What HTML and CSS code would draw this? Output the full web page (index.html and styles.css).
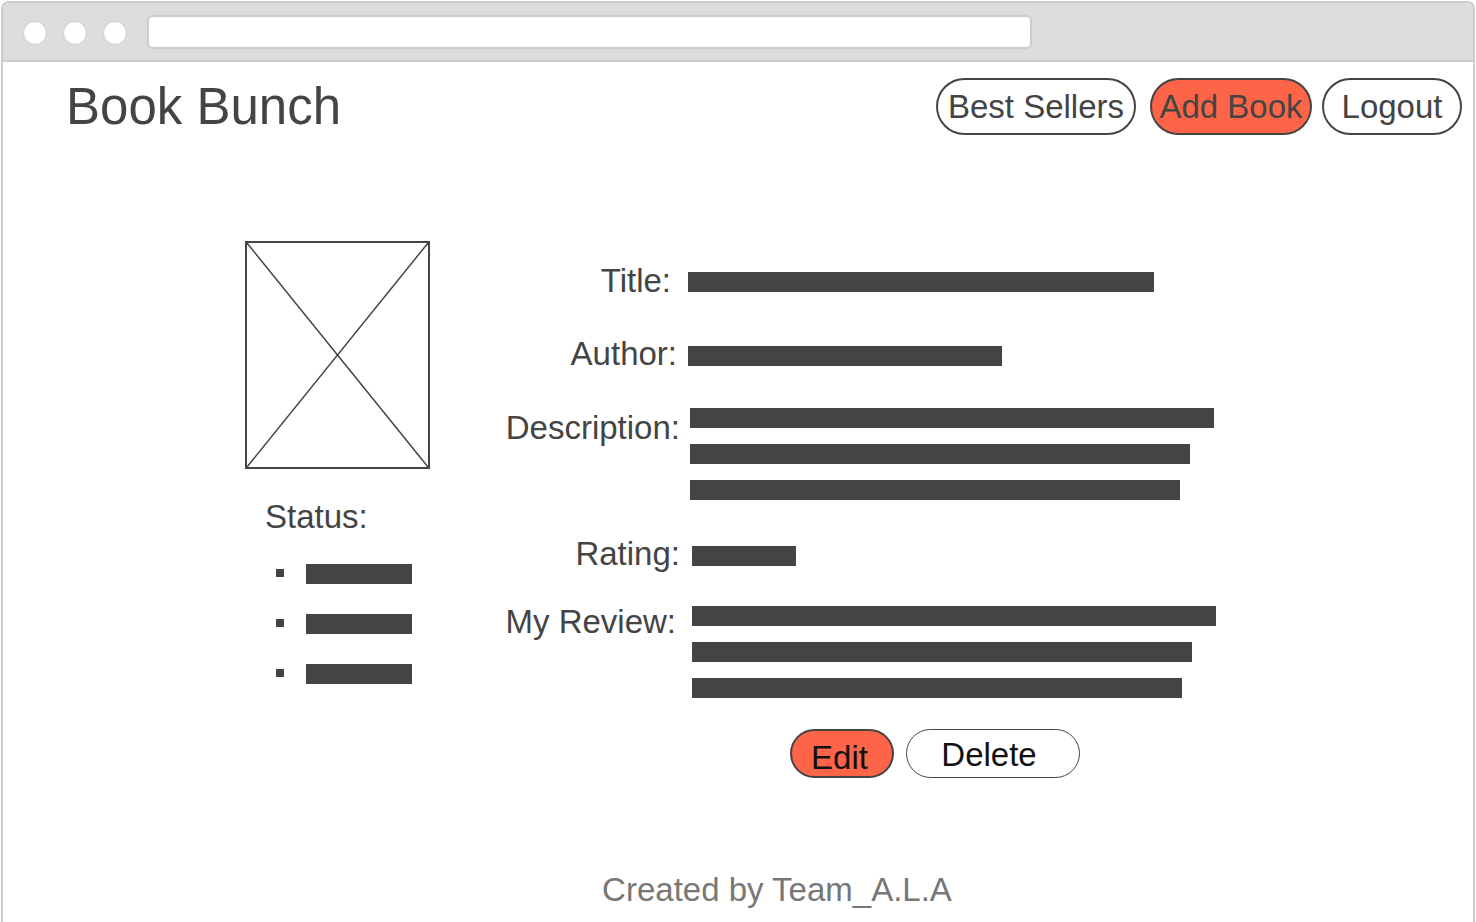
FILE: index.html
```html
<!DOCTYPE html>
<html lang="en">
<head>
<meta charset="utf-8">
<title>Book Bunch</title>
<link rel="stylesheet" href="styles.css">
</head>
<body>
<div class="window">
  <div class="topbar">
    <span class="dot"></span>
    <span class="dot"></span>
    <span class="dot"></span>
    <span class="address"></span>
  </div>
  <div class="page">
    <header class="navbar">
      <h1 class="brand">Book Bunch</h1>
      <nav class="nav">
        <button class="pill pill-best">Best Sellers</button>
        <button class="pill pill-add">Add Book</button>
        <button class="pill pill-logout">Logout</button>
      </nav>
    </header>

    <main class="book">
      <section class="side">
        <div class="cover">
          <svg viewBox="0 0 100 100" preserveAspectRatio="none">
            <line x1="0" y1="0" x2="100" y2="100" vector-effect="non-scaling-stroke"/>
            <line x1="100" y1="0" x2="0" y2="100" vector-effect="non-scaling-stroke"/>
          </svg>
        </div>
        <div class="status-label">Status:</div>
        <ul class="status-list">
          <li><span class="bullet"></span><span class="bar" style="width:106px"></span></li>
          <li><span class="bullet"></span><span class="bar" style="width:106px"></span></li>
          <li><span class="bullet"></span><span class="bar" style="width:106px"></span></li>
        </ul>
      </section>

      <section class="details">
        <div class="row">
          <div class="label label-title">Title:</div>
          <div class="value value-near"><span class="bar" style="width:466px"></span></div>
        </div>
        <div class="row row-author">
          <div class="label label-author">Author:</div>
          <div class="value value-near"><span class="bar" style="width:314px"></span></div>
        </div>
        <div class="row row-desc">
          <div class="label label-desc">Description:</div>
          <div class="value">
            <span class="bar" style="width:524px"></span>
            <span class="bar" style="width:500px"></span>
            <span class="bar" style="width:490px"></span>
          </div>
        </div>
        <div class="row row-rating">
          <div class="label label-rating">Rating:</div>
          <div class="value value-far"><span class="bar" style="width:104px"></span></div>
        </div>
        <div class="row">
          <div class="label label-review">My Review:</div>
          <div class="value value-far">
            <span class="bar" style="width:524px"></span>
            <span class="bar" style="width:500px"></span>
            <span class="bar" style="width:490px"></span>
          </div>
        </div>
        <div class="actions">
          <button class="pill pill-edit">Edit</button>
          <button class="pill pill-delete">Delete</button>
        </div>
      </section>
    </main>

    <footer class="footer">Created by Team_A.L.A</footer>
  </div>
</div>
</body>
</html>
```

FILE: styles.css
```css
* { box-sizing: border-box; }

html, body {
  margin: 0;
  padding: 0;
  background: #ffffff;
  overflow: hidden;
}

body {
  font-family: "Liberation Sans", Arial, sans-serif;
  color: #444444;
}

.window {
  margin: 1px 1px 0 1px;
  height: 940px;
  border: 2px solid #cccccc;
  border-bottom: none;
  border-radius: 8px 8px 0 0;
  overflow: hidden;
}

.topbar {
  height: 59px;
  padding: 3px 0 0 20px;
  background: #dddddd;
  border-bottom: 2px solid #cccccc;
  display: flex;
  align-items: center;
  gap: 16px;
}

.dot {
  width: 24px;
  height: 24px;
  border-radius: 50%;
  background: #ffffff;
  border: 1px solid #cccccc;
  flex: none;
}

.address {
  margin-left: 4px;
  width: 885px;
  height: 34px;
  margin-top: -2px;
  background: #ffffff;
  border: 2px solid #cccccc;
  border-radius: 6px;
}

.navbar {
  display: flex;
  justify-content: space-between;
  align-items: flex-start;
  padding: 16px 11px 0 63px;
}

.brand {
  margin: 0;
  font-weight: normal;
  font-size: 51px;
  line-height: 57px;
  color: #444444;
}

.nav {
  display: flex;
  gap: 14px;
}

.pill {
  font-family: "Liberation Sans", Arial, sans-serif;
  font-size: 33px;
  color: #444444;
  background: #ffffff;
  border: 2px solid #444444;
  border-radius: 999px;
  padding: 0;
  height: 57px;
  line-height: 53px;
  text-align: center;
  white-space: nowrap;
}

.pill-best { width: 200px; }
.pill-add { width: 162px; background: #fe6447; }
.pill-logout { width: 140px; margin-left: -4px; }

.book {
  display: flex;
  align-items: flex-start;
  padding-left: 242px;
  margin-top: 106px;
}

.side {
  width: 185px;
  flex: none;
}

.cover {
  width: 185px;
  height: 228px;
  border: 2px solid #444444;
}

.cover svg {
  display: block;
  width: 100%;
  height: 100%;
}

.cover line {
  stroke: #444444;
  stroke-width: 1.5;
}

.status-label {
  margin-top: 28px;
  padding-left: 20px;
  font-size: 33px;
  line-height: 40px;
}

.status-list {
  list-style: none;
  margin: 27px 0 0 0;
  padding: 0 0 0 31px;
  display: flex;
  flex-direction: column;
  gap: 30px;
}

.status-list li {
  display: flex;
  align-items: center;
}

.bullet {
  width: 8px;
  height: 8px;
  background: #444444;
  margin-right: 22px;
  margin-top: -3px;
}

.bar {
  display: block;
  height: 20px;
  background: #444444;
}

.details {
  margin-left: 60px;
  margin-top: 31px;
  display: flex;
  flex-direction: column;
  gap: 40px;
}

.row {
  display: flex;
  align-items: flex-start;
}

.row-author { margin-top: 14px; }
.row-desc { margin-top: 2px; }
.row-rating { margin-top: 6px; }

.label {
  width: 190px;
  flex: none;
  text-align: right;
  font-size: 33px;
  line-height: 20px;
  white-space: nowrap;
}

.label-title { padding-right: 9px; margin-top: -1px; }
.label-author { padding-right: 3px; margin-top: -2px; }
.label-desc { margin-top: 10px; }
.label-rating { margin-top: -2px; }
.label-review { margin-top: 6px; padding-right: 4px; }

.value {
  margin-left: 10px;
  display: flex;
  flex-direction: column;
  gap: 16px;
}

.value-near { margin-left: 8px; }
.value-far { margin-left: 12px; }

.actions {
  display: flex;
  gap: 12px;
  margin-top: -9px;
  padding-left: 300px;
}

.pill-edit {
  width: 104px;
  height: 49px;
  line-height: 47px;
  padding: 3px 5px 0 0;
  background: #fe6447;
  color: #111111;
}

.pill-delete {
  width: 174px;
  height: 49px;
  line-height: 47px;
  padding: 1px 8px 0 0;
  color: #111111;
  border-width: 1.5px;
}

.footer {
  margin-top: 92px;
  padding-left: 78px;
  text-align: center;
  font-size: 33px;
  line-height: 40px;
  color: #777777;
}
```
